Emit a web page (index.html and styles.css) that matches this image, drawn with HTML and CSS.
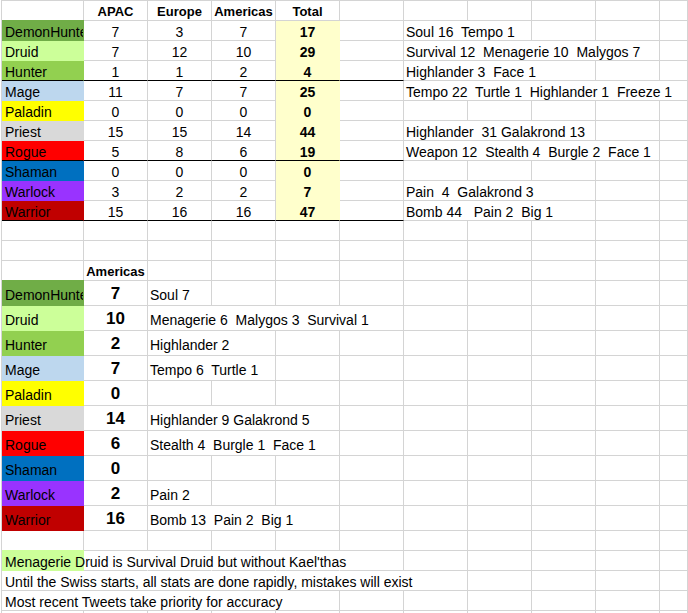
FILE: index.html
```html
<!DOCTYPE html>
<html>
<head>
<meta charset="utf-8">
<link rel="stylesheet" href="styles.css">
</head>
<body>
<div class="sheet">
  <div class="row">
    <div class="c"></div><div class="c ctr hd">APAC</div><div class="c ctr hd">Europe</div><div class="c ctr hd">Americas</div><div class="c ctr hd">Total</div>
    <div class="c"></div><div class="c"></div><div class="c"></div><div class="c"></div><div class="c"></div><div class="c"></div>
  </div>
  <div class="row">
    <div class="c lbl dh top">DemonHunter</div><div class="c ctr">7</div><div class="c ctr">3</div><div class="c ctr">7</div><div class="c ctr tot">17</div><div class="c"></div>
    <div class="c s2">Soul 16  Tempo 1</div><div class="c"></div><div class="c"></div><div class="c"></div>
  </div>
  <div class="row">
    <div class="c lbl dr">Druid</div><div class="c ctr">7</div><div class="c ctr">12</div><div class="c ctr">10</div><div class="c ctr tot">29</div><div class="c"></div>
    <div class="c s4">Survival 12  Menagerie 10  Malygos 7</div><div class="c"></div>
  </div>
  <div class="row">
    <div class="c lbl hu blk">Hunter</div><div class="c ctr blk">1</div><div class="c ctr blk">1</div><div class="c ctr blk">2</div><div class="c ctr tot blk">4</div><div class="c blk"></div>
    <div class="c s3">Highlander 3  Face 1</div><div class="c"></div><div class="c"></div>
  </div>
  <div class="row">
    <div class="c lbl ma">Mage</div><div class="c ctr">11</div><div class="c ctr">7</div><div class="c ctr">7</div><div class="c ctr tot">25</div><div class="c"></div>
    <div class="c s5">Tempo 22  Turtle 1  Highlander 1  Freeze 1</div>
  </div>
  <div class="row">
    <div class="c lbl pa">Paladin</div><div class="c ctr">0</div><div class="c ctr">0</div><div class="c ctr">0</div><div class="c ctr tot">0</div><div class="c"></div>
    <div class="c"></div><div class="c"></div><div class="c"></div><div class="c"></div><div class="c"></div>
  </div>
  <div class="row">
    <div class="c lbl pr">Priest</div><div class="c ctr">15</div><div class="c ctr">15</div><div class="c ctr">14</div><div class="c ctr tot">44</div><div class="c"></div>
    <div class="c s3">Highlander  31 Galakrond 13</div><div class="c"></div><div class="c"></div>
  </div>
  <div class="row">
    <div class="c lbl ro blk">Rogue</div><div class="c ctr blk">5</div><div class="c ctr blk">8</div><div class="c ctr blk">6</div><div class="c ctr tot blk">19</div><div class="c blk"></div>
    <div class="c s4">Weapon 12  Stealth 4  Burgle 2  Face 1</div><div class="c"></div>
  </div>
  <div class="row">
    <div class="c lbl sh">Shaman</div><div class="c ctr">0</div><div class="c ctr">0</div><div class="c ctr">0</div><div class="c ctr tot">0</div><div class="c"></div>
    <div class="c"></div><div class="c"></div><div class="c"></div><div class="c"></div><div class="c"></div>
  </div>
  <div class="row">
    <div class="c lbl wl">Warlock</div><div class="c ctr">3</div><div class="c ctr">2</div><div class="c ctr">2</div><div class="c ctr tot">7</div><div class="c"></div>
    <div class="c s3">Pain  4  Galakrond 3</div><div class="c"></div><div class="c"></div>
  </div>
  <div class="row">
    <div class="c lbl wr blk">Warrior</div><div class="c ctr blk">15</div><div class="c ctr blk">16</div><div class="c ctr blk">16</div><div class="c ctr tot blk">47</div><div class="c blk"></div>
    <div class="c s3">Bomb 44   Pain 2  Big 1</div><div class="c"></div><div class="c"></div>
  </div>
  <div class="row">
    <div class="c"></div><div class="c"></div><div class="c"></div><div class="c"></div><div class="c"></div><div class="c"></div>
    <div class="c"></div><div class="c"></div><div class="c"></div><div class="c"></div><div class="c"></div>
  </div>
  <div class="row">
    <div class="c"></div><div class="c"></div><div class="c"></div><div class="c"></div><div class="c"></div><div class="c"></div>
    <div class="c"></div><div class="c"></div><div class="c"></div><div class="c"></div><div class="c"></div>
  </div>
  <div class="row">
    <div class="c"></div><div class="c ctr hd">Americas</div><div class="c"></div><div class="c"></div><div class="c"></div><div class="c"></div>
    <div class="c"></div><div class="c"></div><div class="c"></div><div class="c"></div><div class="c"></div>
  </div>
  <div class="row tall">
    <div class="c lbl dh top">DemonHunter</div><div class="c ctr big">7</div>
    <div class="c">Soul 7</div><div class="c"></div><div class="c"></div><div class="c"></div><div class="c"></div><div class="c"></div><div class="c"></div><div class="c"></div><div class="c"></div>
  </div>
  <div class="row tall">
    <div class="c lbl dr">Druid</div><div class="c ctr big">10</div>
    <div class="c s4">Menagerie 6  Malygos 3  Survival 1</div><div class="c"></div><div class="c"></div><div class="c"></div><div class="c"></div><div class="c"></div>
  </div>
  <div class="row tall">
    <div class="c lbl hu">Hunter</div><div class="c ctr big">2</div>
    <div class="c s2">Highlander 2</div><div class="c"></div><div class="c"></div><div class="c"></div><div class="c"></div><div class="c"></div><div class="c"></div><div class="c"></div>
  </div>
  <div class="row tall">
    <div class="c lbl ma">Mage</div><div class="c ctr big">7</div>
    <div class="c s2">Tempo 6  Turtle 1</div><div class="c"></div><div class="c"></div><div class="c"></div><div class="c"></div><div class="c"></div><div class="c"></div><div class="c"></div>
  </div>
  <div class="row tall">
    <div class="c lbl pa">Paladin</div><div class="c ctr big">0</div>
    <div class="c"></div><div class="c"></div><div class="c"></div><div class="c"></div><div class="c"></div><div class="c"></div><div class="c"></div><div class="c"></div><div class="c"></div>
  </div>
  <div class="row tall">
    <div class="c lbl pr">Priest</div><div class="c ctr big">14</div>
    <div class="c s3">Highlander 9 Galakrond 5</div><div class="c"></div><div class="c"></div><div class="c"></div><div class="c"></div><div class="c"></div><div class="c"></div>
  </div>
  <div class="row tall">
    <div class="c lbl ro">Rogue</div><div class="c ctr big">6</div>
    <div class="c s3">Stealth 4  Burgle 1  Face 1</div><div class="c"></div><div class="c"></div><div class="c"></div><div class="c"></div><div class="c"></div><div class="c"></div>
  </div>
  <div class="row tall">
    <div class="c lbl sh">Shaman</div><div class="c ctr big">0</div>
    <div class="c"></div><div class="c"></div><div class="c"></div><div class="c"></div><div class="c"></div><div class="c"></div><div class="c"></div><div class="c"></div><div class="c"></div>
  </div>
  <div class="row tall">
    <div class="c lbl wl">Warlock</div><div class="c ctr big">2</div>
    <div class="c">Pain 2</div><div class="c"></div><div class="c"></div><div class="c"></div><div class="c"></div><div class="c"></div><div class="c"></div><div class="c"></div><div class="c"></div>
  </div>
  <div class="row tall">
    <div class="c lbl wr">Warrior</div><div class="c ctr big">16</div>
    <div class="c s3">Bomb 13  Pain 2  Big 1</div><div class="c"></div><div class="c"></div><div class="c"></div><div class="c"></div><div class="c"></div><div class="c"></div>
  </div>
  <div class="row">
    <div class="c"></div><div class="c"></div><div class="c"></div><div class="c"></div><div class="c"></div><div class="c"></div>
    <div class="c"></div><div class="c"></div><div class="c"></div><div class="c"></div><div class="c"></div>
  </div>
  <div class="row">
    <div class="c lbl dr top ov">Menagerie Druid is Survival Druid but without Kael'thas</div><div class="c x"></div><div class="c x"></div><div class="c x"></div><div class="c x"></div><div class="c"></div>
    <div class="c"></div><div class="c"></div><div class="c"></div><div class="c"></div><div class="c"></div>
  </div>
  <div class="row">
    <div class="c lbl s7">Until the Swiss starts, all stats are done rapidly, mistakes will exist</div>
    <div class="c"></div><div class="c"></div><div class="c"></div><div class="c"></div>
  </div>
  <div class="row">
    <div class="c lbl s5">Most recent Tweets take priority for accuracy</div>
    <div class="c"></div><div class="c"></div><div class="c"></div><div class="c"></div><div class="c"></div><div class="c"></div>
  </div>
  <div class="row">
    <div class="c"></div><div class="c"></div><div class="c"></div><div class="c"></div><div class="c"></div><div class="c"></div>
    <div class="c"></div><div class="c"></div><div class="c"></div><div class="c"></div><div class="c"></div>
  </div>
</div>
</body>
</html>
```
FILE: styles.css
```css
* { box-sizing: border-box; }
html, body { margin: 0; padding: 0; background: #fff; }
body {
  width: 688px;
  height: 613px;
  overflow: hidden;
  font-family: "Liberation Sans", Arial, sans-serif;
  font-size: 14px;
  color: #000;
}
.sheet {
  margin-left: 1px;
  width: 687px;
  overflow: hidden;
  border-left: 1px solid #d4d4d4;
  border-top: 1px solid #d4d4d4;
}
.row {
  display: grid;
  grid-template-columns: 82px repeat(9, 64px) 1fr;
  height: 20px;
}
.row.tall { height: 25px; }
.c {
  display: flex;
  align-items: flex-end;
  min-width: 0;
  padding: 0 2px;
  line-height: 16px;
  white-space: pre;
  overflow: hidden;
  border-right: 1px solid #d4d4d4;
  border-bottom: 1px solid #d4d4d4;
}
.tall .c { padding-bottom: 2px; }
.lbl { padding-left: 3px; }
.ctr { justify-content: center; }
.hd { font-weight: bold; font-size: 13px; }
.big { font-weight: bold; font-size: 17px; line-height: 18px; }
.s2 { grid-column: span 2; }
.s3 { grid-column: span 3; }
.s4 { grid-column: span 4; }
.s5 { grid-column: span 5; }
.s7 { grid-column: span 7; }
.ov { overflow: visible; }
.c.x { border-right-color: transparent; }

.tot { background: #ffffcc; border-color: #ffffcc; font-weight: bold; }
.dh { background: #70ad47; border-color: #70ad47; }
.dr { background: #ccff99; border-color: #ccff99; }
.hu { background: #92d050; border-color: #92d050; }
.ma { background: #bdd7ee; border-color: #bdd7ee; }
.pa { background: #ffff00; border-color: #ffff00; }
.pr { background: #d9d9d9; border-color: #d9d9d9; }
.ro { background: #ff0000; border-color: #ff0000; }
.sh { background: #0070c0; border-color: #0070c0; }
.wl { background: #9933ff; border-color: #9933ff; }
.wr { background: #c00000; border-color: #c00000; }
.dh.top { box-shadow: 0 -1px 0 #70ad47; }
.dr.top { box-shadow: 0 -1px 0 #ccff99; }
.c.blk { border-bottom-color: #000; }
```
